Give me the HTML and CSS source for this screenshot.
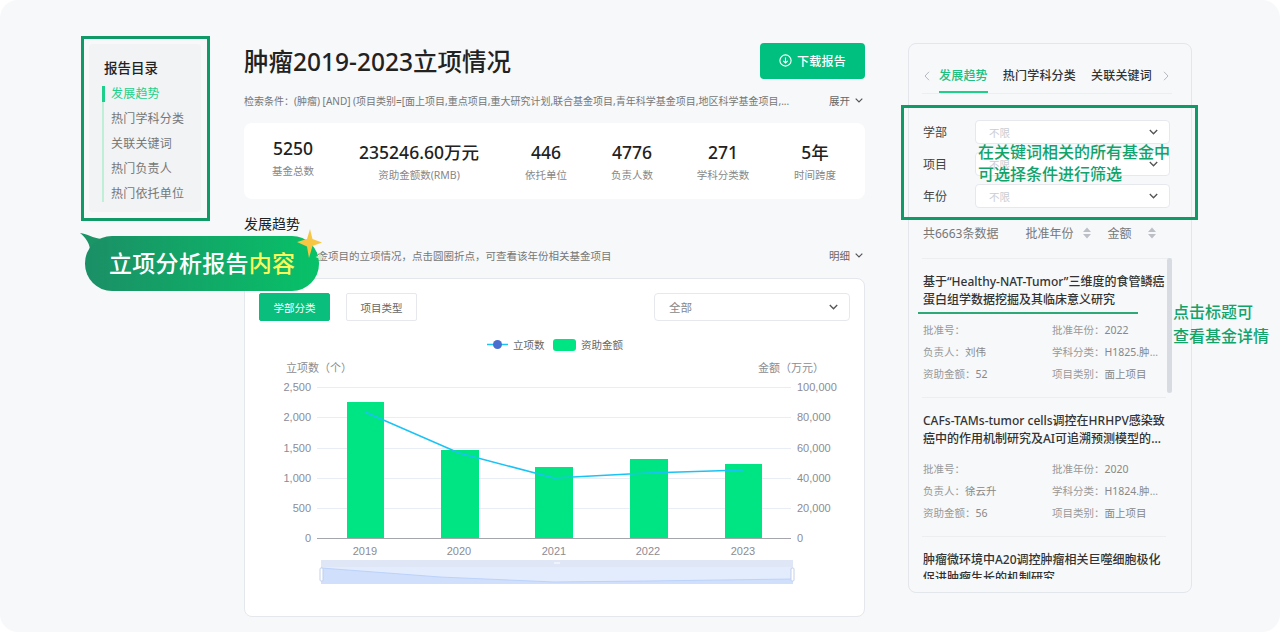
FILE: index.html
```html
<!DOCTYPE html>
<html lang="zh-CN">

<head>
    <meta charset="UTF-8">
    <title>立项分析报告</title>
    <link rel="stylesheet" href="styles.css">
</head>

<body>
    <div class="page">
        <nav class="toc">
            <h3>报告目录</h3>
            <ul>
                <li class="active">发展趋势</li>
                <li>热门学科分类</li>
                <li>关联关键词</li>
                <li>热门负责人</li>
                <li>热门依托单位</li>
            </ul>
        </nav>

        <main class="report">
            <header class="title-row">
                <h1>肿瘤2019-2023立项情况</h1>
                <button class="download">
                    <svg width="13" height="13" viewBox="0 0 13 13" fill="none" stroke="#fff" stroke-width="1.1">
                        <circle cx="6.5" cy="6.5" r="5.6" />
                        <path d="M6.5 3.4v5.4M4.3 6.8l2.2 2.2 2.2-2.2" />
                    </svg>
                    下载报告
                </button>
            </header>

            <div class="condition">
                <span class="condition-text">检索条件：(肿瘤) [AND] (项目类别=[面上项目,重点项目,重大研究计划,联合基金项目,青年科学基金项目,地区科学基金项目,...</span>
                <span class="more">展开
                    <svg class="chev" width="8" height="5" viewBox="0 0 8 5"><path d="M.7.7 4 4l3.3-3.3" /></svg>
                </span>
            </div>

            <section class="stats">
                <div class="stat stat-up"><b>5250</b><span>基金总数</span></div>
                <div class="stat"><b>235246.60万元</b><span>资助金额数(RMB)</span></div>
                <div class="stat"><b>446</b><span>依托单位</span></div>
                <div class="stat"><b>4776</b><span>负责人数</span></div>
                <div class="stat"><b>271</b><span>学科分类数</span></div>
                <div class="stat"><b>5年</b><span>时间跨度</span></div>
            </section>

            <h2>发展趋势</h2>
            <div class="desc">
                <span>展示近五年中基金项目的立项情况，点击圆圈折点，可查看该年份相关基金项目</span>
                <span class="more">明细
                    <svg class="chev" width="8" height="5" viewBox="0 0 8 5"><path d="M.7.7 4 4l3.3-3.3" /></svg>
                </span>
            </div>

            <section class="chart-card">
                <div class="toolbar">
                    <button class="tab-btn on">学部分类</button>
                    <button class="tab-btn">项目类型</button>
                    <div class="select all">
                        <span>全部</span>
                        <svg class="chev" width="9" height="6" viewBox="0 0 8 5"><path d="M.7.7 4 4l3.3-3.3" /></svg>
                    </div>
                </div>
                <svg class="chart" width="619" height="294" viewBox="245 322 619 294">
                    <!-- legend -->
                    <path d="M487 345.500h21" stroke="#19c3f5" stroke-width="1.500" />
                    <circle cx="497.500" cy="345.500" r="4.500" fill="#4a6ed0" />
                    <text class="lg" x="513" y="349.500">立项数</text>
                    <rect x="553" y="340" width="23" height="12" rx="3" fill="#00e583" />
                    <text class="lg" x="581" y="349.500">资助金额</text>

                    <text class="ax" x="286" y="373">立项数（个）</text>
                    <text class="ax" x="758" y="373">金额（万元）</text>

                    <!-- grid -->
                    <g stroke="#e9eef6" stroke-width="1">
                        <path d="M317 388.500h474M317 418.500h474M317 449.500h474M317 479.500h474M317 509.500h474" />
                    </g>
                    <path d="M317 539.500h474" stroke="#a5a6ad" stroke-width="1" />

                    <g class="ax" text-anchor="end">
                        <text x="311" y="392">2,500</text>
                        <text x="311" y="422">2,000</text>
                        <text x="311" y="453">1,500</text>
                        <text x="311" y="483">1,000</text>
                        <text x="311" y="513">500</text>
                        <text x="311" y="543">0</text>
                    </g>
                    <g class="ax">
                        <text x="797" y="392">100,000</text>
                        <text x="797" y="422">80,000</text>
                        <text x="797" y="453">60,000</text>
                        <text x="797" y="483">40,000</text>
                        <text x="797" y="513">20,000</text>
                        <text x="797" y="543">0</text>
                    </g>

                    <g fill="#00e583">
                        <rect x="347" y="403" width="37" height="136" />
                        <rect x="441" y="451" width="38" height="88" />
                        <rect x="535" y="468" width="38" height="71" />
                        <rect x="630" y="460" width="38" height="79" />
                        <rect x="725" y="465" width="37" height="74" />
                    </g>
                    <path d="M365 413 459 454 554 479 648 474 743 471" fill="none" stroke="#19c3f5" stroke-width="1.500" />

                    <g class="ax" text-anchor="middle">
                        <text x="365" y="556">2019</text>
                        <text x="459" y="556">2020</text>
                        <text x="554" y="556">2021</text>
                        <text x="648" y="556">2022</text>
                        <text x="743" y="556">2023</text>
                    </g>

                    <!-- range slider -->
                    <rect x="321" y="561" width="472" height="7" fill="#dfe6f5" />
                    <rect x="321" y="568" width="472" height="17" fill="#e3ecfd" />
                    <path d="M321 569 440 578 554 583 648 582 793 580V585H321Z" fill="#d0dffc" />
                    <path d="M321 569 440 578 554 583 648 582 793 580" fill="none" stroke="#bcd2fa" />
                    <rect x="320" y="569" width="3" height="13" rx="1" fill="#fff" stroke="#c3d0ea" />
                    <rect x="791" y="569" width="3" height="13" rx="1" fill="#fff" stroke="#c3d0ea" />
                    <path d="M555 563v2M557 563v2M559 563v2" stroke="#fff" />
                </svg>
            </section>
        </main>

        <aside class="funds">
            <div class="tabs">
                <svg class="arrow left" width="6" height="10" viewBox="0 0 6 10"><path d="M5 .8 1 5l4 4.200" /></svg>
                <span class="tab active">发展趋势</span>
                <span class="tab">热门学科分类</span>
                <span class="tab">关联关键词</span>
                <svg class="arrow right" width="6" height="10" viewBox="0 0 6 10"><path d="M1 .8 5 5 1 9.200" /></svg>
            </div>

            <div class="filters">
                <label>学部</label>
                <div class="select"><span>不限</span><svg class="chev" width="9" height="6" viewBox="0 0 8 5"><path d="M.7.7 4 4l3.300-3.300" /></svg></div>
                <label>项目</label>
                <div class="select"><span>不限</span><svg class="chev" width="9" height="6" viewBox="0 0 8 5"><path d="M.7.7 4 4l3.300-3.300" /></svg></div>
                <label>年份</label>
                <div class="select"><span>不限</span><svg class="chev" width="9" height="6" viewBox="0 0 8 5"><path d="M.7.7 4 4l3.300-3.300" /></svg></div>
            </div>

            <div class="summary">
                <span class="count">共6663条数据</span>
                <span class="sort year">批准年份</span>
                <svg class="updown" width="8" height="12" viewBox="0 0 8 12"><path d="M4 .5 8 5H0ZM4 11.500 0 7h8Z" /></svg>
                <span class="sort amount">金额</span>
                <svg class="updown" width="8" height="12" viewBox="0 0 8 12"><path d="M4 .5 8 5H0ZM4 11.500 0 7h8Z" /></svg>
            </div>

            <div class="list">
                <article class="fund">
                    <h4>基于“Healthy-NAT-Tumor”三维度的食管鳞癌蛋白组学数据挖掘及其临床意义研究</h4>
                    <div class="meta">
                        <p>批准号：</p>
                        <p>批准年份：<em>2022</em></p>
                        <p>负责人：<em>刘伟</em></p>
                        <p>学科分类：<em>H1825.肿瘤免疫治疗</em></p>
                        <p>资助金额：<em>52</em></p>
                        <p>项目类别：<em>面上项目</em></p>
                    </div>
                </article>
                <article class="fund">
                    <h4>CAFs-TAMs-tumor cells调控在HRHPV感染致癌中的作用机制研究及AI可追溯预测模型的构建与临床验证</h4>
                    <div class="meta">
                        <p>批准号：</p>
                        <p>批准年份：<em>2020</em></p>
                        <p>负责人：<em>徐云升</em></p>
                        <p>学科分类：<em>H1824.肿瘤免疫治疗</em></p>
                        <p>资助金额：<em>56</em></p>
                        <p>项目类别：<em>面上项目</em></p>
                    </div>
                </article>
                <article class="fund">
                    <h4>肿瘤微环境中A20调控肿瘤相关巨噬细胞极化促进肿瘤生长的机制研究</h4>
                </article>
            </div>
            <div class="scrollbar"></div>
        </aside>

        <!-- annotations on top of the screenshot -->
        <div class="frame frame-toc"></div>
        <div class="frame frame-filter"></div>
        <p class="note note-filter">在关键词相关的所有基金中<br>可选择条件进行筛选</p>
        <div class="note-line"></div>
        <p class="note note-title">点击标题可<br>查看基金详情</p>

        <svg class="tail" width="24" height="16" viewBox="0 0 24 16"><path d="M0 0C8 1 12 5 22 6L10 16C9 9 5 4 0 0Z" fill="#1b9466" /></svg>
        <div class="bubble">立项分析报告<span>内容</span></div>
        <svg class="star" width="34" height="36" viewBox="0 0 34 36">
            <path d="M14 0 16.500 10 26 13.500 16.500 17 13 29 11 17.500 1 13 11 10Z" fill="#f7c744" />
            <path d="M24 23 25 26.500 28.500 28 25 29.500 24 33 23 29.500 19.500 28 23 26.500Z" fill="#d6e6c8" />
        </svg>
    </div>
</body>

</html>
```

FILE: styles.css
```css
* {
    margin: 0;
    padding: 0;
    box-sizing: border-box;
}

body {
    background-color: #fff;
    font-family: "Noto Sans", "Noto Sans CJK SC", sans-serif;
    color: #333;
    overflow: hidden;
}

button {
    font-family: inherit;
    border: none;
}

.page {
    position: relative;
    display: flex;
    align-items: flex-start;
    gap: 43px;
    width: 1280px;
    height: 632px;
    padding: 42px 0 0 89px;
    background-color: #f6f8fa;
    border-radius: 18px;
    overflow: hidden;
}

.chev {
    fill: none;
    stroke: #555;
    stroke-width: 1.2;
}

/* left menu */
.toc {
    flex: none;
    width: 112px;
    height: 168px;
    margin-top: 2px;
    padding: 14px 0 0 13px;
    background-color: #f1f3f5;
    border-radius: 4px;
}

.toc h3 {
    padding-left: 2px;
    font-size: 13.500px;
    line-height: 20px;
    font-weight: 500;
    color: #222;
}

.toc ul {
    display: flex;
    flex-direction: column;
    gap: 9px;
    margin-top: 8px;
    padding-left: 7px;
    border-left: 2px solid #bdf0d6;
    list-style: none;
}

.toc li {
    font-size: 12px;
    line-height: 16px;
    letter-spacing: 0.2px;
    color: #777;
    white-space: nowrap;
}

.toc li.active {
    margin-left: -9px;
    padding-left: 6px;
    border-left: 3px solid #1dcf8b;
    color: #1dcf8b;
}

/* middle column */
.report {
    flex: none;
    width: 621px;
}

.title-row {
    display: flex;
    align-items: center;
    justify-content: space-between;
    height: 36px;
}

.title-row h1 {
    font-size: 24.500px;
    font-weight: 500;
    color: #222;
}

.download {
    display: flex;
    align-items: center;
    justify-content: center;
    gap: 5px;
    width: 105px;
    height: 36px;
    margin-top: 1px;
    background-color: #00c07f;
    border-radius: 4px;
    color: #fff;
    font-size: 12px;
    font-weight: 500;
    letter-spacing: 0.2px;
}

.condition,
.desc {
    display: flex;
    align-items: center;
    justify-content: space-between;
    height: 16px;
    margin-top: 14px;
    font-size: 10px;
    color: #777;
    white-space: nowrap;
}

.more {
    display: flex;
    align-items: center;
    gap: 5px;
    padding-right: 2px;
    font-size: 10.500px;
    color: #666;
}

.stats {
    display: grid;
    grid-template-columns: 98px 154px 100px 72px 110px 74px;
    align-items: center;
    height: 76px;
    margin-top: 15px;
    background-color: #fff;
    border-radius: 8px;
}

.stat {
    display: flex;
    flex-direction: column;
    align-items: center;
    gap: 2px;
}

.stat-up {
    margin-top: -8px;
}

.stat b {
    font-size: 17.500px;
    line-height: 26px;
    font-weight: 500;
    color: #222;
}

.stat span {
    font-size: 10.500px;
    line-height: 16px;
    color: #888;
}

.report h2 {
    margin-top: 15px;
    font-size: 14px;
    line-height: 20px;
    font-weight: 400;
    color: #222;
}

.desc {
    height: 20px;
    margin-top: 11px;
    font-size: 10.500px;
}

.chart-card {
    height: 339px;
    margin-top: 13px;
    padding: 14px 14px 0;
    background-color: #fff;
    border: 1px solid #e4e7ec;
    border-radius: 8px;
}

.toolbar {
    display: flex;
    gap: 16px;
    height: 28px;
}

.tab-btn {
    width: 71px;
    height: 28px;
    background-color: #fff;
    border: 1px solid #e6e8ee;
    border-radius: 2px;
    font-size: 10.500px;
    color: #666;
}

.tab-btn.on {
    background-color: #0abf7e;
    border-color: #0abf7e;
    color: #fff;
}

.select {
    display: flex;
    align-items: center;
    justify-content: space-between;
    height: 24px;
    padding: 0 11px 0 13px;
    background-color: #fff;
    border: 1px solid #e6e8ee;
    border-radius: 4px;
    font-size: 10.500px;
    color: #c9cdd3;
}

.select.all {
    width: 196px;
    height: 28px;
    margin-left: auto;
    padding-left: 14px;
    font-size: 11.500px;
    color: #888;
}

.chart {
    display: block;
    margin: 0 -14px;
}

.chart text {
    font-family: "Liberation Sans", "Noto Sans CJK SC", sans-serif;
}

.ax {
    font-size: 11px;
    fill: #8c8c94;
}

.lg {
    font-size: 10.500px;
    fill: #666;
}

/* right column */
.funds {
    position: relative;
    flex: none;
    width: 284px;
    height: 550px;
    margin-top: 1px;
    padding: 22px 19px 0 13px;
    border: 1px solid #e3e6ea;
    border-radius: 8px;
}

.tabs {
    display: flex;
    gap: 15px;
    align-items: flex-start;
    border-bottom: 1px solid #eceef1;
}

.tab {
    padding-bottom: 5px;
    font-size: 12px;
    line-height: 20px;
    letter-spacing: 0.2px;
    font-weight: 500;
    color: #333;
    white-space: nowrap;
    border-bottom: 2px solid transparent;
}

.tab.active {
    color: #1dbf83;
    border-bottom-color: #1dcf8b;
}

.arrow {
    flex: none;
    margin-top: 5px;
    fill: none;
    stroke: #b5b9bf;
    stroke-width: 1;
}

.arrow.left {
    margin: 5px -6px 0 2px;
}

.arrow.right {
    margin-left: -4px;
}

.filters {
    display: grid;
    grid-template-columns: 53px 195px;
    gap: 8px 0;
    align-items: center;
    margin-top: 26px;
    font-size: 12px;
    color: #444;
}

.filters label {
    padding-left: 1px;
}

.summary {
    display: flex;
    align-items: center;
    height: 16px;
    margin-top: 17px;
    padding-left: 1px;
    font-size: 12px;
    color: #777;
}

.sort.year {
    margin: 0 10px 0 27px;
}

.sort.amount {
    margin: 0 16px 0 16px;
}

.updown {
    fill: #bcc0c6;
}

.list {
    width: 250px;
    height: 321px;
    margin-top: 17px;
    padding-right: 6px;
    border-top: 1px solid #eceef1;
    overflow: hidden;
}

.fund {
    padding: 14px 0 12px 1px;
    border-bottom: 1px solid #eceef1;
}

.fund:last-child {
    border-bottom: none;
}

.fund h4 {
    display: -webkit-box;
    -webkit-box-orient: vertical;
    -webkit-line-clamp: 2;
    overflow: hidden;
    font-size: 12px;
    line-height: 18px;
    font-weight: 500;
    color: #333;
}

.fund:last-child h4 {
    -webkit-line-clamp: 3;
}

.meta {
    display: grid;
    grid-template-columns: 129px 112px;
    margin-top: 10px;
}

.meta p {
    overflow: hidden;
    font-size: 10.500px;
    line-height: 22px;
    color: #999;
    white-space: nowrap;
    text-overflow: ellipsis;
}

.meta em {
    font-style: normal;
    color: #888;
}

.scrollbar {
    position: absolute;
    top: 214px;
    left: 258px;
    width: 5px;
    height: 135px;
    background-color: #d8dce2;
    border-radius: 3px;
}

/* annotations */
.frame {
    position: absolute;
    border: 3px solid #0f9a68;
}

.frame-toc {
    top: 36px;
    left: 81px;
    width: 129px;
    height: 185px;
}

.frame-filter {
    top: 105px;
    left: 901px;
    width: 297px;
    height: 115px;
}

.note {
    position: absolute;
    font-size: 16px;
    font-weight: 500;
    color: #12a36a;
    white-space: nowrap;
}

.note-filter {
    top: 141px;
    left: 978px;
    line-height: 22px;
}

.note-title {
    top: 300px;
    left: 1173px;
    line-height: 24px;
}

.note-line {
    position: absolute;
    top: 312px;
    left: 918px;
    width: 220px;
    height: 2px;
    background-color: #2fa877;
}

.bubble {
    position: absolute;
    top: 236px;
    left: 85px;
    width: 234px;
    height: 55px;
    padding-left: 24px;
    background: linear-gradient(90deg, #1b8f66, #07c268);
    border-radius: 27px;
    color: #fff;
    font-size: 23px;
    line-height: 54px;
    font-weight: 500;
    letter-spacing: 0.3px;
}

.bubble span {
    color: #f8fb5a;
}

.tail {
    position: absolute;
    top: 233px;
    left: 80px;
}

.star {
    position: absolute;
    top: 229px;
    left: 296px;
}
```
